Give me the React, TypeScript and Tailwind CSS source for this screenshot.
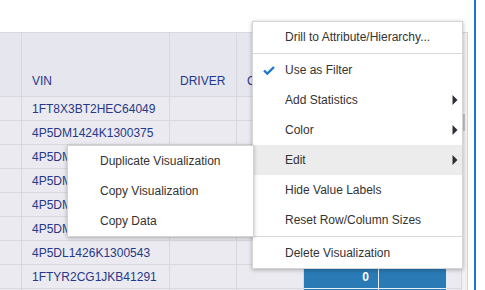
import React from "react";

const cols = ["w-[22px]", "w-[148px]", "w-[67px]", "w-[67px]", "w-[75px]", "w-[68px]", "w-[15px]"];
const vins = [
  "1FT8X3BT2HEC64049",
  "4P5DM1424K1300375",
  "4P5DM1424K1300376",
  "4P5DM1424K1300377",
  "4P5DM1424K1300378",
  "4P5DM1424K1300379",
  "4P5DL1426K1300543",
  "1FTYR2CG1JKB41291",
  "",
];

function Arrow() {
  return (
    <svg width="6" height="10" viewBox="0 0 6 10" className="absolute right-[4px] top-[10px]">
      <path d="M0.5 0 L5.5 5 L0.5 10 Z" fill="#2e2e38" />
    </svg>
  );
}

function Item({ label, arrow, check, active }: { label: string; arrow?: boolean; check?: boolean; active?: boolean }) {
  return (
    <div className={`relative h-[30px] flex items-center pl-[32px] text-[12px] text-[#333] ${active ? "bg-[#ececec]" : ""}`}>
      {check && (
        <svg width="12" height="9" viewBox="0 0 12 9" className="absolute left-[10px] top-[11px]">
          <path d="M1 4.5 L4.3 7.6 L11 1" fill="none" stroke="#1f78d1" strokeWidth="2.4" />
        </svg>
      )}
      {label}
      {arrow && <Arrow />}
    </div>
  );
}

function Sep() {
  return (
    <div className="h-[3px] flex items-center">
      <div className="h-px w-full bg-[#d9d9d9]" />
    </div>
  );
}

export default function App() {
  return (
    <div
      className="relative w-[485px] h-[290px] overflow-hidden bg-white"
      style={{ fontFamily: '"Liberation Sans", Arial, sans-serif' }}
    >
      <div className="flex h-full">
        <div className="flex flex-col w-[474px]">
          <div className="h-[32px] shrink-0" />
          <div className="flex flex-1">
            <div className="w-[462px] border-t border-[#d8d8de]">
              <div className="flex h-[64px] bg-[#e6e6ee]">
                {["", "VIN", "DRIVER", "CAR", "", "", ""].map((h, i) => (
                  <div
                    key={i}
                    className={`${cols[i]} shrink-0 border-r border-b border-[#d8d8de] flex items-end pb-[6px] pl-[10px] text-[12px] text-[#263889] overflow-hidden whitespace-nowrap`}
                  >
                    {h}
                  </div>
                ))}
              </div>
              {vins.map((v, r) => (
                <div key={r} className="flex h-[24px] bg-[#eaeaf0]">
                  {cols.map((c, i) => {
                    const blue = r >= 7 && (i === 4 || i === 5);
                    return (
                      <div
                        key={i}
                        className={`${c} shrink-0 border-r border-b flex items-center text-[12px] overflow-hidden whitespace-nowrap ${
                          blue
                            ? "bg-[#2a7ab5] border-[#e8eef5] justify-end pr-[9px] text-white font-bold text-[11px]"
                            : "border-[#d8d8de] pl-[10px] text-[#263889]"
                        }`}
                      >
                        {i === 1 ? v : blue && i === 4 && r === 7 ? "0" : ""}
                      </div>
                    );
                  })}
                </div>
              ))}
            </div>
            <div className="w-[6px] border-t border-r border-[#d6d6d6] bg-[#f1f1f1]">
              <div className="mt-[81px] h-[17px] w-[3px] bg-[#c4c4c4]" />
            </div>
          </div>
        </div>
        <div className="w-[2px] bg-[#1a74d1]" />
      </div>

      {/* Main context menu */}
      <div className="absolute left-[252px] top-[21px] w-[211px] bg-white border border-[#d4d4d4] shadow-[0_1px_4px_rgba(0,0,0,0.28)] z-10">
        <Item label="Drill to Attribute/Hierarchy..." />
        <Sep />
        <Item label="Use as Filter" check />
        <Item label="Add Statistics" arrow />
        <Item label="Color" arrow />
        <Item label="Edit" arrow active />
        <Item label="Hide Value Labels" />
        <Item label="Reset Row/Column Sizes" />
        <Sep />
        <Item label="Delete Visualization" />
      </div>

      {/* Submenu */}
      <div className="absolute left-[67px] top-[145px] w-[187px] bg-white border border-[#d4d4d4] shadow-[0_1px_4px_rgba(0,0,0,0.28)] z-20">
        <Item label="Duplicate Visualization" />
        <Item label="Copy Visualization" />
        <Item label="Copy Data" />
      </div>
    </div>
  );
}
